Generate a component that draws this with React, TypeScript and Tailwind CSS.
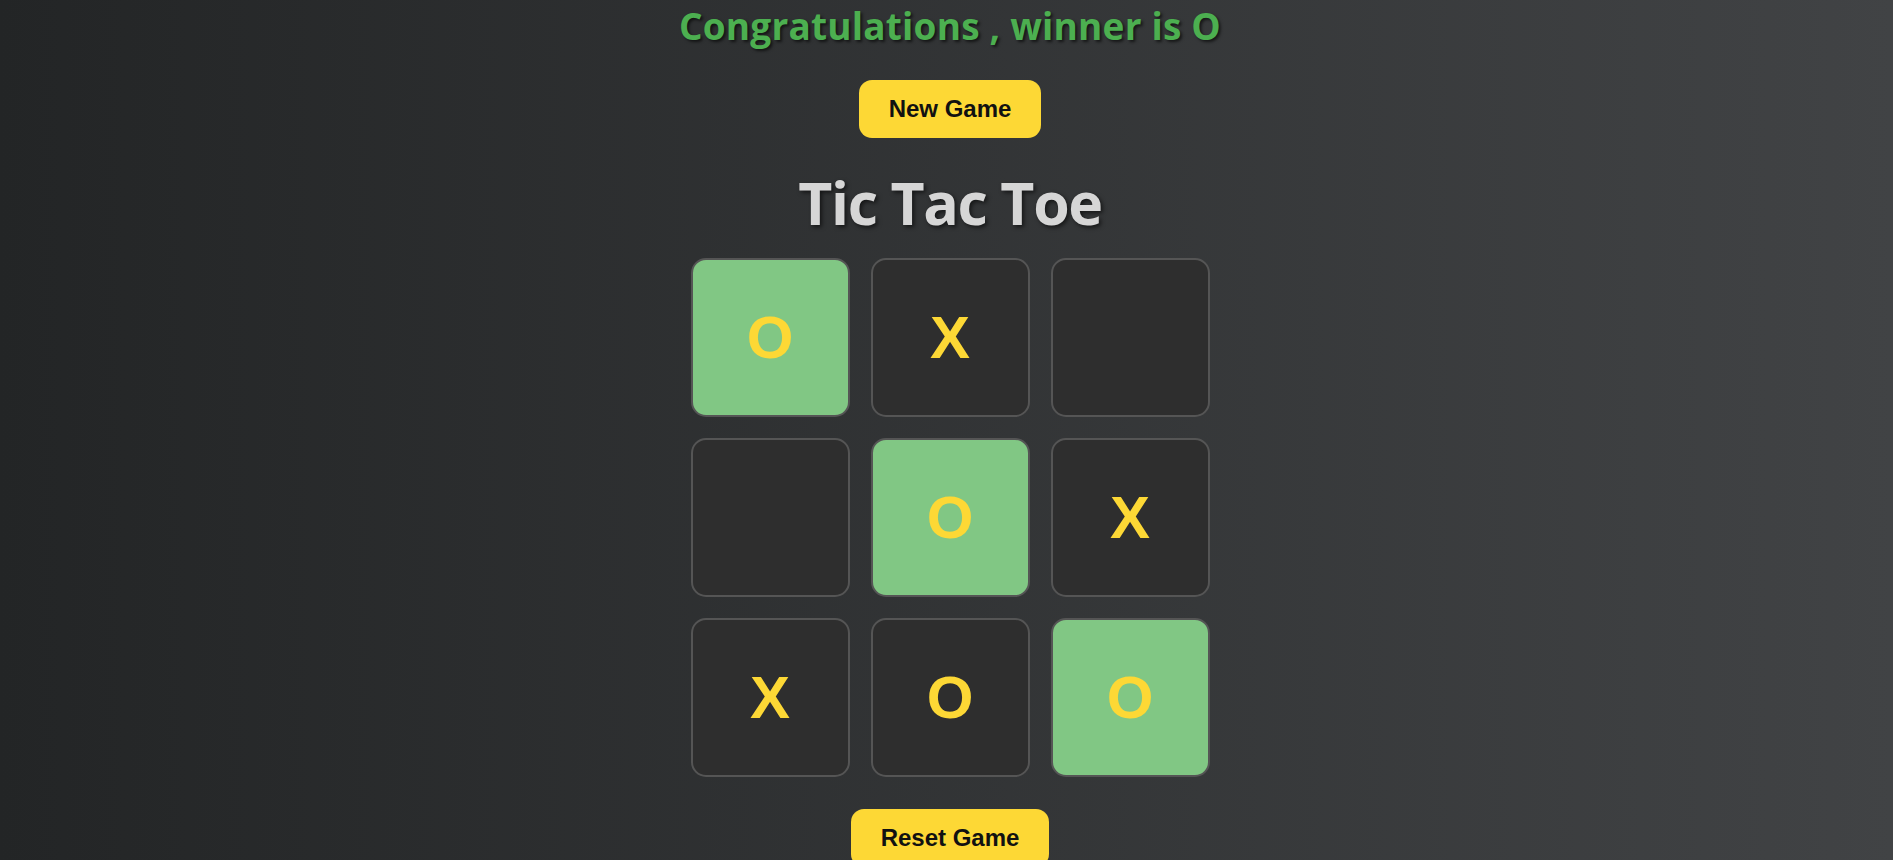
import { useState } from "react";

type Cell = "X" | "O" | null;

const initialBoard: Cell[] = ["O", "X", null, null, "O", "X", "X", "O", "O"];
const winLine = [0, 4, 8];

function Square({ value, win }: { value: Cell; win: boolean }) {
  return (
    <div
      className={`flex h-[159px] w-[159px] items-center justify-center rounded-[15px] border-2 border-[#555] font-['Liberation_Sans',Arial,sans-serif] text-[60px] font-bold text-[#fdd835] ${
        win ? "bg-[#81c784]" : "bg-[#2e2e2e]"
      }`}
    >
      {value}
    </div>
  );
}

function App() {
  const [board] = useState<Cell[]>(initialBoard);
  const winner = "O";

  return (
    <div className="flex min-h-screen flex-col items-center bg-[linear-gradient(to_right,#232526,#414345)] pl-[7px] pb-10 font-['Liberation_Sans',Arial,sans-serif]">
      <h2 className="mt-[2px] h-[48px] font-['Open_Sans',sans-serif] text-[37px] leading-[48px] font-bold tracking-[0.2px] text-[#4caf50] [text-shadow:2px_2px_3px_rgba(0,0,0,0.6)]">
        Congratulations , winner is {winner}
      </h2>
      <button className="mt-[30px] h-[58px] rounded-[13px] bg-[#fdd835] px-[30px] text-[24px] leading-[58px] font-bold text-[#111]">
        New Game
      </button>
      <h1 className="mt-[28px] h-[72px] font-['Open_Sans',sans-serif] text-[59px] leading-[72px] font-bold tracking-[-1.4px] text-[#d6d6d6] [text-shadow:2px_2px_4px_rgba(0,0,0,0.6)]">
        Tic Tac Toe
      </h1>
      <div className="mt-[20px] grid grid-cols-3 gap-[21px]">
        {board.map((v, i) => (
          <Square key={i} value={v} win={winLine.includes(i)} />
        ))}
      </div>
      <button className="mt-[32px] h-[58px] rounded-[13px] bg-[#fdd835] px-[30px] text-[24px] leading-[58px] font-bold text-[#111]">
        Reset Game
      </button>
    </div>
  );
}

export default App;
